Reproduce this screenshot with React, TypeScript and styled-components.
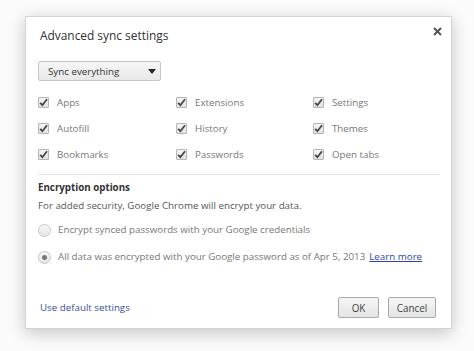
import React from "react";
import styled, { createGlobalStyle } from "styled-components";

const Global = createGlobalStyle`
  html, body { margin: 0; padding: 0; }
  body { background: #fbfbfb; font-family: "Open Sans", "Noto Sans", sans-serif; }
`;

const Page = styled.div`
  width: 474px;
  height: 351px;
  box-sizing: border-box;
  padding: 16px 0 0 25px;
  position: relative;
  overflow: hidden;
`;

const Dialog = styled.div`
  position: relative;
  width: 427px;
  height: 313px;
  box-sizing: border-box;
  background: #fff;
  border: 1px solid #d4d4d4;
  box-shadow: 0 4px 16px rgba(0, 0, 0, 0.22);
  display: flex;
  flex-direction: column;
  padding: 0 12px 0 12px;
  color: #444;
  font-size: 9.75px;
`;

const Title = styled.h1`
  margin: 10px 0 0 2px;
  font-size: 11.9px;
  font-weight: 400;
  line-height: 16px;
  color: #333;
`;

const Close = styled.div`
  position: absolute;
  top: 7px;
  right: 7px;
  width: 14px;
  height: 14px;
  display: flex;
  align-items: center;
  justify-content: center;
`;

const Select = styled.div`
  margin-top: 18px;
  width: 123px;
  height: 20px;
  box-sizing: border-box;
  border: 1px solid #c6c6c6;
  border-radius: 2px;
  background: linear-gradient(#f6f6f6, #e8e8e8);
  display: flex;
  align-items: center;
  justify-content: space-between;
  padding: 0 4px 0 9px;
  color: #333;
`;

const Arrow = styled.span`
  width: 0;
  height: 0;
  border-left: 4px solid transparent;
  border-right: 4px solid transparent;
  border-top: 5px solid #222;
`;

const Grid = styled.div`
  margin-top: 8px;
  display: grid;
  grid-template-columns: 138px 137px 1fr;
  grid-auto-rows: 26px;
`;

const Item = styled.label`
  display: flex;
  align-items: center;
  gap: 8px;
  color: #777;
`;

const Box = styled.span`
  width: 11px;
  height: 11px;
  box-sizing: border-box;
  border: 1px solid #b5b5b5;
  border-radius: 1px;
  background: linear-gradient(#f4f4f4, #e2e2e2);
  display: inline-flex;
  align-items: center;
  justify-content: center;
`;

const Separator = styled.hr`
  margin: 7px 0 0 0;
  border: none;
  border-top: 1px solid #e3e3e3;
  width: 402px;
`;

const Heading = styled.div`
  margin-top: 5px;
  font-weight: 700;
  color: #333;
  line-height: 16px;
`;

const Para = styled.div`
  margin-top: 2px;
  line-height: 16px;
  color: #555;
`;

const RadioRow = styled.div<{ $top: number }>`
  margin-top: ${(p) => p.$top}px;
  display: flex;
  align-items: center;
  gap: 7px;
  color: #777;
  line-height: 16px;
  white-space: nowrap;
`;

const Radio = styled.span<{ $checked?: boolean }>`
  width: 13px;
  height: 13px;
  flex: none;
  box-sizing: border-box;
  border-radius: 50%;
  border: 1px solid #c8c8c8;
  background: linear-gradient(#f7f7f7, #e6e6e6);
  display: inline-flex;
  align-items: center;
  justify-content: center;
  &::after {
    content: "";
    display: ${(p) => (p.$checked ? "block" : "none")};
    width: 5px;
    height: 5px;
    border-radius: 50%;
    background: #777;
  }
`;

const Link = styled.a`
  color: #2f45a8;
  text-decoration: underline;
  margin-left: 4px;
`;

const Footer = styled.div`
  margin-top: auto;
  margin-bottom: 10px;
  display: flex;
  align-items: center;
  justify-content: space-between;
  padding-left: 2px;
  padding-right: 3px;
`;

const FooterLink = styled.a`
  color: #3a4da3;
  text-decoration: none;
`;

const Buttons = styled.div`
  display: flex;
  gap: 9px;
`;

const Button = styled.button<{ $w: number }>`
  width: ${(p) => p.$w}px;
  height: 21px;
  border: 1px solid #a8a8a8;
  border-radius: 2px;
  background: linear-gradient(#f5f5f5, #e4e4e4);
  font-family: inherit;
  font-size: 9.9px;
  color: #444;
  padding: 0;
`;

const Check = () => (
  <svg width="9" height="9" viewBox="0 0 9 9">
    <path d="M1.2 4.8 L3.4 7.2 L8 1.3" fill="none" stroke="#444" strokeWidth="1.8" />
  </svg>
);

const items = [
  "Apps", "Extensions", "Settings",
  "Autofill", "History", "Themes",
  "Bookmarks", "Passwords", "Open tabs",
];

export default function App() {
  return (
    <>
      <Global />
      <Page>
        <Dialog>
          <Title>Advanced sync settings</Title>
          <Close>
            <svg width="9" height="9" viewBox="0 0 9 9">
              <path d="M1 1 L8 8 M8 1 L1 8" stroke="#555" strokeWidth="2" />
            </svg>
          </Close>
          <Select>
            <span>Sync everything</span>
            <Arrow />
          </Select>
          <Grid>
            {items.map((t) => (
              <Item key={t}>
                <Box><Check /></Box>
                {t}
              </Item>
            ))}
          </Grid>
          <Separator />
          <Heading>Encryption options</Heading>
          <Para>For added security, Google Chrome will encrypt your data.</Para>
          <RadioRow $top={8}>
            <Radio />
            <span>Encrypt synced passwords with your Google credentials</span>
          </RadioRow>
          <RadioRow $top={11}>
            <Radio $checked />
            <span>
              All data was encrypted with your Google password as of Apr 5, 2013
              <Link href="#">Learn more</Link>
            </span>
          </RadioRow>
          <Footer>
            <FooterLink href="#">Use default settings</FooterLink>
            <Buttons>
              <Button $w={41}>OK</Button>
              <Button $w={48}>Cancel</Button>
            </Buttons>
          </Footer>
        </Dialog>
      </Page>
    </>
  );
}
